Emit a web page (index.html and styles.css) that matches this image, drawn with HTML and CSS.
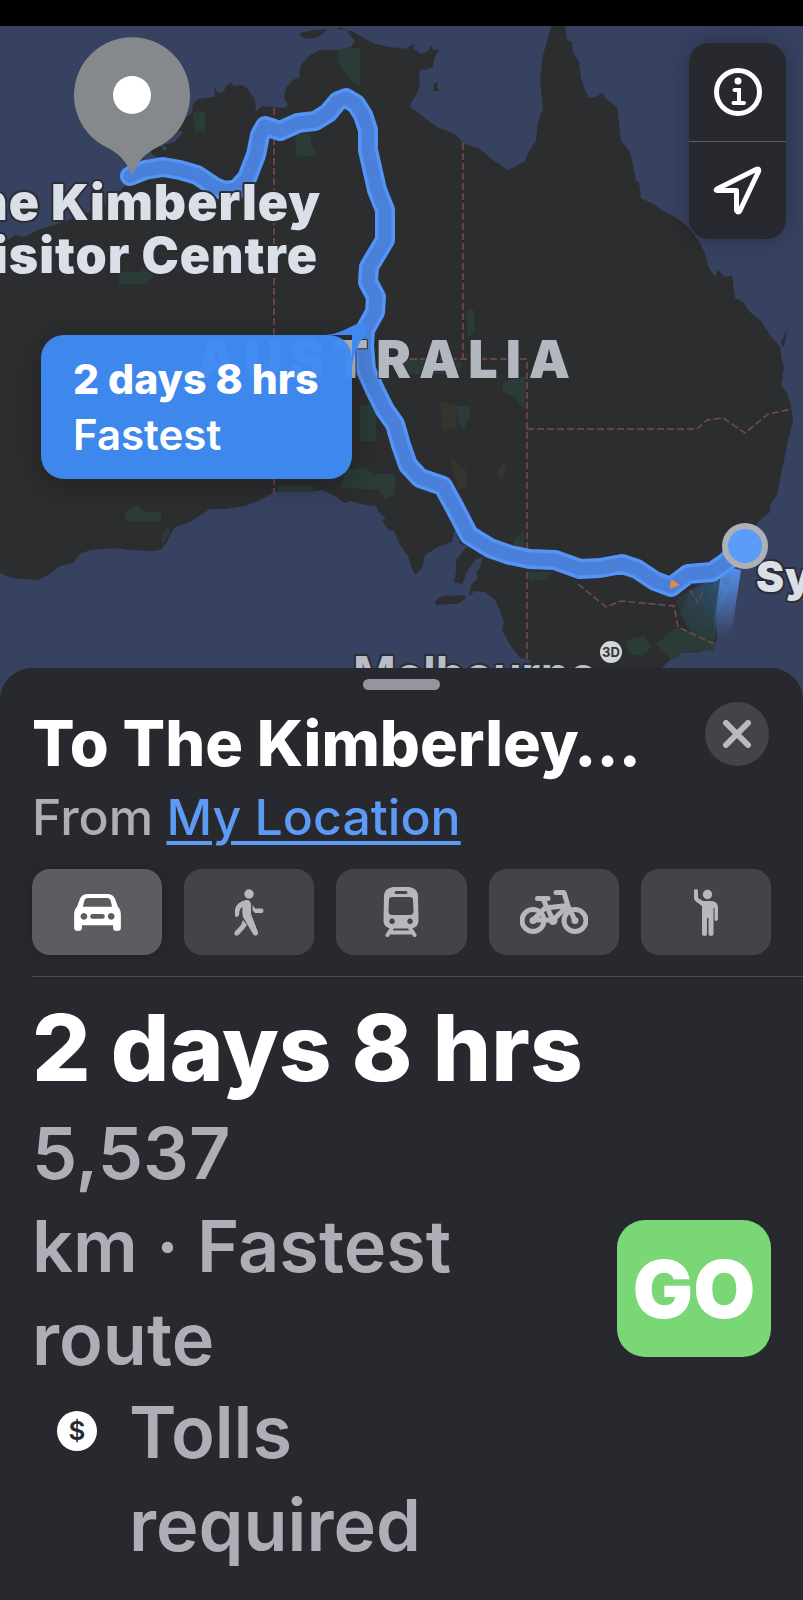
FILE: index.html
```
<!DOCTYPE html>
<html lang="en">

<head>
      <meta charset="UTF-8">
      <meta name="viewport" content="width=device-width, initial-scale=1.0">
      <title>Directions</title>
      <link rel="stylesheet" href="styles.css">
</head>

<body>
      <div class="status-bar"></div>

      <section class="map">
            <svg class="map-canvas" viewBox="0 26 803 682" preserveAspectRatio="xMidYMin slice">
                  <defs>
                        <linearGradient id="beam" x1="0" y1="0" x2="0" y2="1">
                              <stop offset="0" stop-color="#5b9bff" stop-opacity="0.9" />
                              <stop offset="1" stop-color="#5b9bff" stop-opacity="0" />
                        </linearGradient>
                        <linearGradient id="haze" x1="1" y1="0" x2="0.3" y2="1">
                              <stop offset="0" stop-color="#2f5f95" stop-opacity="0.9" />
                              <stop offset="1" stop-color="#2b3a48" stop-opacity="0" />
                        </linearGradient>
                        <path id="route" d="M130 176 L145 170 163 167 180 170 197 175 215 187 225 191 237 189 247 178 256 155 260 135 265 126 280 131 298 123 315 121 328 113 338 101 346 98 356 104 363 115 368 130 368 150 377 190 385 210 385 240 369 267 368 282 376 297 375 312 365 330 364 345 366 370 376 392 385 410 395 424 401 445 408 465 420 478 443 486 455 508 469 535 490 548 510 555 530 559 555 560 580 569 600 568 622 564 637 569 655 581 671 587 688 574 712 572 725 563 745 545" />
                  </defs>

                  <!-- land -->
                  <g class="land">
                        <path d="M-5 245 L8 240 15 235 25 237 38 230 60 223 85 214 105 205 118 195 122 188 135 180 145 165 160 158 152 155 150 148 160 145 165 152 167 148 163 145 175 142 183 132 176 130 185 118 192 113 193 104 198 99 205 98 215 97 214 87 218 93 224 91 226 86 231 82 234 86 242 85 247 88 255 100 256 111 262 106 285 108 288 104 284 98 286 88 293 80 300 77 299 72 302 64 310 55 320 50 338 50 348 50 352 45 355 41 350 35 346 30 338 29 340 27 346 31 352 31 360 36 375 44 390 47 400 48 L406 49 415 43 413 48 421 54 428 51 431 45 433 50 439 50 434 59 433 67 425 70 422 69 419 72 420 83 418 92 409 106 437 127 455 134 463 143 480 149 490 158 508 170 524 162 530 150 536 140 538 122 543 108 540 80 543 55 552 24 565 24 567 40 572 42 573 52 579 62 581 78 585 90 589 98 596 97 602 93 606 99 617 107 619 122 621 140 630 152 634 170 636 181 639 183 641 198 655 205 665 212 680 220 690 229 700 243 706 256 708 266 715 277 718 270 725 277 732 275 735 298 743 302 750 312 760 320 772 338 780 346 781 356 784 368 781 385 788 395 791 405 793 422 788 440 784 460 780 480 777 495 770 505 770 512 762 518 752 530 742 550 735 565 725 590 718 605 716 620 717 640 712 648 700 652 680 653 668 662 650 680 640 710 550 710 537 680 530 660 520 658 510 645 502 630 504 622 500 610 495 600 485 592 475 591 469 596 471 585 478 578 476 572 480 568 482 557 475 560 467 572 462 584 454 582 456 572 456 560 464 550 468 546 460 544 455 528 452 542 438 547 425 555 422 568 415 575 411 566 408 556 400 545 398 540 394 531 388 530 382 520 386 518 380 514 376 506 365 505 350 501 345 503 335 496 322 490 310 492 275 492 260 500 245 506 225 509 210 509 190 522 175 527 168 540 162 549 155 551 128 550 115 548 90 550 80 554 73 563 60 566 50 574 38 580 12 578 -5 571Z" />
                        <path d="M300 33 Q312 30 327 29 Q322 38 308 39 Q300 38 300 33Z" />
                        <path d="M434 84 l4 -2 -1 5 2 4 -6 0Z" />
                        <path d="M435 601 q6 -6 14 -5 l15 -1 2 3 -8 6 -10 0 -12 1Z" />
                        <path d="M783 348 L781 342 787 330 785 342Z" />
                  </g>

                  <!-- parks -->
                  <g class="park">
                        <path d="M337 50 L348 47 360 49 360 86 352 83 340 66Z" />
                        <path d="M193 112 h12 v20 h-10Z" />
                        <path d="M295 134 h16 v10 l6 10 -6 2 -15 1Z" />
                        <path d="M119 272 h20 l8 -4 8 9 -10 7 h-26Z" />
                        <path d="M466 310 h8 v22 l-6 6Z" />
                        <path d="M360 405 h16 v36 h-16Z" />
                        <path d="M345 470 l20 -2 10 6 20 0 v20 l-10 6 -6 -10 -38 -2Z" />
                        <path d="M125 512 l12 -8 8 8 16 0 v9 h-37Z" />
                        <path d="M278 486 h35 v6 h-35Z" />
                        <path d="M400 358 l40 2 22 2 -4 12 h-58Z" />
                        <path d="M503 382 l22 -6 v34 l-10 -12 -12 -6Z" />
                        <path d="M455 406 h15 v12 l-7 12 -4 -6Z" />
                        <path d="M514 540 l10 -10 v18 l-10 -2Z" />
                        <path d="M528 572 h25 l-8 7 -16 2Z" />
                        <path d="M690 590 l30 -8 -2 26 -4 42 -30 2 -12 8 -16 -16 20 -16 14 4 -10 -20Z" />
                        <path d="M625 640 l20 -4 6 12 -10 8 -12 -2Z" />
                        <path d="M162 535 l6 -8 2 6 -8 12Z" />
                  </g>
                  <g class="desert">
                        <path d="M440 402 l16 3 1 22 -14 4Z" />
                        <path d="M450 458 l16 12 0 18 -8 2Z" />
                        <path d="M498 468 l9 -7 -3 18 -6 0Z" />
                  </g>

                  <!-- state borders -->
                  <g class="border">
                        <path d="M274 108 V494" />
                        <path d="M463 143 V358" />
                        <path d="M400 359 H527 V660" />
                        <path d="M527 429 H697 L707 420 723 418 745 433 768 414 792 409" />
                        <path d="M578 584 L606 607 621 601 674 606 678 627 714 644" />
                        <path d="M690 590 L698 603 704 588" />
                  </g>

                  <!-- heading beam of the current position -->
                  <path fill="url(#haze)" d="M715 575 L675 600 700 650 730 590Z" />
                  <path fill="url(#beam)" d="M722 566 L741 570 731 636 712 636Z" />

                  <use href="#route" class="route-outer" />
                  <use href="#route" class="route-inner" />
                  <path d="M671 579 L680 585 670 589Z" fill="#e8884a" />

                  <!-- labels -->
                  <g class="place">
                        <text x="321" y="220" text-anchor="end" font-size="50">The Kimberley</text>
                        <text x="318" y="273" text-anchor="end" font-size="50">Visitor Centre</text>
                        <text x="756" y="592" font-size="42">Sydney</text>
                  </g>
                  <text class="city" x="353" y="690" font-size="46">Melbourne</text>
                  <text class="country" x="196" y="378" font-size="52">AUSTRALIA</text>

                  <!-- pins -->
                  <circle cx="611" cy="652" r="11" fill="#d3d7dc" />
                  <text class="badge-3d" x="611" y="657">3D</text>
                  <circle class="here" cx="745" cy="546" r="20" />
                  <path class="pin" d="M132 175 C127 164 122 155 108 148 A58 58 0 1 1 156 148 C142 155 137 164 132 175Z" />
                  <circle cx="132" cy="95" r="19" fill="#fff" />
            </svg>

            <button class="callout" type="button">
                  <svg class="callout-tail" viewBox="0 0 46 44">
                        <path d="M0 12 C14 12 28 1 36 0 C44 -1 44 6 40 12 C34 20 30 26 27 44 V12Z" />
                  </svg>
                  <strong>2 days 8 hrs</strong>
                  <span>Fastest</span>
            </button>

            <div class="map-controls">
                  <button type="button" aria-label="Map info">
                        <svg viewBox="0 0 50 50" width="50" height="50">
                              <circle cx="25" cy="25" r="21.5" fill="none" stroke="#fff" stroke-width="5" />
                              <circle cx="25" cy="14" r="3.5" fill="#fff" />
                              <path d="M21.5 23 H26 V36 M20.5 36 H31" fill="none" stroke="#fff" stroke-width="4" stroke-linecap="round" />
                        </svg>
                  </button>
                  <button type="button" aria-label="Track location">
                        <svg viewBox="0 0 50 50" width="50" height="50">
                              <path d="M4 23 L43 3.5 Q46.5 2 45.500 5.5 L27 44.5 Q25 47.5 23.5 44.500 V24.5 H4.500 Q2 24.5 4 23Z" fill="none" stroke="#fff" stroke-width="5" stroke-linejoin="round" />
                        </svg>
                  </button>
            </div>
      </section>

      <main class="sheet">
            <div class="handle"></div>

            <header class="sheet-header">
                  <div class="titles">
                        <h1>To The Kimberley…</h1>
                        <p>From <a href="#">My Location</a></p>
                  </div>
                  <button class="close" type="button" aria-label="Close">
                        <svg viewBox="0 0 28 28" width="28" height="28">
                              <path d="M3 3 L25 25 M25 3 L3 25" stroke="#b9b9c0" stroke-width="6" stroke-linecap="round" />
                        </svg>
                  </button>
            </header>

            <nav class="modes">
                  <button class="mode active" type="button" aria-label="Drive">
                        <svg viewBox="0 0 48 38" width="47" height="37">
                              <path fill-rule="evenodd" d="M14 0 H34 Q40 0 42 5 L45 13 Q48 16 48 21 V35 Q48 38 44 38 Q40 38 40 35 V32 H8 V35 Q8 38 4 38 Q0 38 0 35 V21 Q0 16 3 13 L6 5 Q8 0 14 0Z M14 4 Q11 4 10.500 7 L9 13 H39 L37.500 7 Q37 4 34 4Z M10 19.500 a3.500 3.500 0 1 0 .1 0Z M38 19.500 a3.500 3.500 0 1 0 .1 0Z M19 20.500 a2.500 2.500 0 0 0 0 5 H29 a2.500 2.500 0 0 0 0 -5Z" />
                        </svg>
                  </button>
                  <button class="mode" type="button" aria-label="Walk">
                        <svg viewBox="0 0 30 47" width="30" height="47">
                              <circle cx="15" cy="5" r="4.700" />
                              <path d="M12 11 Q17 11 17 16 V25 L24 43 Q24.500 46 22 46.500 Q20 47 19 45 L9 28 Q8 25 8.500 18 Q6 19 5.500 22 L5 26 Q4 28 2.500 28 Q1 28 1 26 V20 Q3 13 12 11Z" />
                              <path d="M9 31 L13 36 Q11 39 5 45.500 Q3 47.500 1 46 Q-.5 44.500 1 42.500 L7 36Z" />
                              <path d="M18.500 16 L21 19.500 H27.500 Q29.500 19.500 29.500 21.500 Q29.500 24 27.500 24 H21 Q18.500 22 18.500 20Z" />
                        </svg>
                  </button>
                  <button class="mode" type="button" aria-label="Transit">
                        <svg viewBox="0 0 36 50" width="36" height="50">
                              <path fill-rule="evenodd" d="M10 0 H26 Q34 1 35 8 L35.500 34 Q35 41 28 41.500 H8 Q1 41 .5 34 L1 8 Q2 1 10 0Z M13 4 a1.500 1.500 0 0 0 0 3 H23 a1.500 1.500 0 0 0 0 -3Z M9 10 Q6 10 6 13 L5.500 25 Q6 28 9 28 H27 Q30 28 30.500 25 L30 13 Q30 10 27 10Z M9 31.500 a2.800 2.800 0 1 0 .1 0Z M27 31.500 a2.800 2.800 0 1 0 .1 0Z" />
                              <path d="M9 41 L4.500 48 M27 41 L31.500 48 M8 45.500 H28" class="rail" />
                        </svg>
                  </button>
                  <button class="mode" type="button" aria-label="Cycle">
                        <svg viewBox="0 0 68 44" width="68" height="44" class="bike">
                              <circle cx="13" cy="30.500" r="11" />
                              <circle cx="55" cy="30.500" r="11" />
                              <path d="M36 2.500 H44 L48 16 55 30.500 M17.500 8.500 H28 M23 9 L33 30 H13 L25 18 48 15.500 33 30" />
                              <circle cx="33" cy="30.500" r="2" />
                              <circle cx="55" cy="30.500" r="1" />
                              <circle cx="13" cy="30.500" r="1" />
                        </svg>
                  </button>
                  <button class="mode" type="button" aria-label="Ride hailing">
                        <svg viewBox="0 0 24 47" width="24" height="47">
                              <circle cx="13.500" cy="5.500" r="4.700" />
                              <path d="M0 2 Q0 0 2 0 Q4 0 4 2 V9 L9 12 H17 Q24 12 24 19 V30 Q24 32 22 32 Q20.500 32 20.500 30 V19 H19.500 V44.500 Q19.500 47 17 47 Q14.500 47 14.500 44.500 V29 H13 V44.500 Q13 47 10.500 47 Q8 47 8 44.500 V17 L2 12.500 Q0 11 0 9Z" />
                        </svg>
                  </button>
            </nav>

            <section class="route">
                  <div class="route-info">
                        <h2>2 days 8 hrs</h2>
                        <p>5,537<br>km · Fastest<br>route</p>
                        <div class="tolls">
                              <span class="coin">$</span>
                              <p>Tolls<br>required</p>
                        </div>
                  </div>
                  <button class="go" type="button">GO</button>
            </section>
      </main>
</body>

</html>
```
FILE: styles.css
```
* {
      box-sizing: border-box;
}

body {
      margin: 0;
      min-height: 100vh;
      display: flex;
      flex-direction: column;
      background-color: #28292e;
      color: #fff;
      font-family: Inter, "Liberation Sans", sans-serif;
      overflow-x: hidden;
}

h1,
h2,
p {
      margin: 0;
}

button {
      border: none;
      padding: 0;
      margin: 0;
      color: inherit;
      font-family: inherit;
      cursor: pointer;
}

.status-bar {
      height: 26px;
      background-color: #000;
}

/* map */

.map {
      position: relative;
      height: 682px;
      background-color: #374261;
      overflow: hidden;
}

.map-canvas {
      display: block;
      width: 100%;
      height: 100%;
}

.land {
      fill: #2c2d2f;
}

.park {
      fill: #2a3b38;
}

.desert {
      fill: #34352f;
}

.border {
      fill: none;
      stroke: #7c4a4e;
      stroke-width: 1.5;
      stroke-dasharray: 7 3;
}

.route-outer,
.route-inner {
      fill: none;
      stroke: #5394f6;
      stroke-width: 20;
      stroke-linecap: round;
      stroke-linejoin: round;
}

.route-inner {
      stroke: #4a80d9;
      stroke-width: 13;
}

.place,
.city,
.country {
      fill: #dbe0e8;
      stroke: #2c2d33;
      stroke-width: 4;
      stroke-linejoin: round;
      paint-order: stroke;
      font-weight: 900;
}

.place {
      letter-spacing: 1px;
}

.city {
      fill: #b9bdc6;
      font-weight: 700;
}

.country {
      fill: #b3b7c0;
      stroke-width: 2;
      letter-spacing: 8px;
}

.badge-3d {
      fill: #33353a;
      font-size: 13px;
      font-weight: 700;
      text-anchor: middle;
}

.here {
      fill: #5b9bfa;
      stroke: #aeb0b6;
      stroke-width: 6;
}

.pin {
      fill: #86898b;
}

.callout {
      position: absolute;
      left: 41px;
      top: 309px;
      display: flex;
      flex-direction: column;
      align-items: flex-start;
      padding: 16px 30px 16px 32px;
      min-width: 311px;
      border-radius: 23px;
      background-color: rgba(63, 138, 243, 0.97);
      box-shadow: 0 6px 30px rgba(0, 0, 0, 0.25);
      font-size: 42px;
      line-height: 56px;
      white-space: nowrap;
}

.callout strong {
      font-size: 41px;
      font-weight: 800;
}

.callout span {
      font-weight: 600;
}

.callout-tail {
      position: absolute;
      right: -19px;
      top: -12px;
      width: 46px;
      height: 44px;
      fill: #3f89f0;
}

.map-controls {
      position: absolute;
      top: 17px;
      right: 17px;
      width: 97px;
      border-radius: 20px;
      background-color: #28292e;
      box-shadow: 0 0 24px rgba(0, 0, 0, 0.25);
}

.map-controls button {
      display: flex;
      align-items: center;
      justify-content: center;
      width: 100%;
      height: 98px;
      background: none;
}

.map-controls button + button {
      border-top: 1px solid #5b5c61;
}

/* bottom sheet */

.sheet {
      position: relative;
      flex: 1;
      display: flex;
      flex-direction: column;
      margin-top: -40px;
      padding-top: 11px;
      border-radius: 32px 32px 0 0;
      background-color: #28292e;
}

.handle {
      width: 77px;
      height: 11px;
      margin: 0 auto;
      border-radius: 6px;
      background-color: #96959d;
}

.sheet-header {
      display: flex;
      justify-content: space-between;
      align-items: flex-start;
      padding: 12px 34px 0 32px;
}

.titles h1 {
      font-size: 63px;
      line-height: 82px;
      font-weight: 800;
      white-space: nowrap;
}

.titles p {
      font-size: 50px;
      line-height: 66px;
      font-weight: 500;
      color: #aeaeb6;
}

.titles a {
      color: #5c9af5;
      text-decoration-thickness: 4px;
      text-underline-offset: 6px;
}

.close {
      display: flex;
      align-items: center;
      justify-content: center;
      flex: none;
      width: 64px;
      height: 64px;
      border-radius: 50%;
      background-color: #434448;
}

.modes {
      display: grid;
      grid-template-columns: repeat(5, 1fr);
      gap: 22px;
      padding: 19px 32px 21px;
}

.mode {
      display: flex;
      align-items: center;
      justify-content: center;
      height: 86px;
      border-radius: 18px;
      background-color: #434448;
      fill: #b7b7bf;
      stroke: none;
}

.mode.active {
      background-color: #5c5d60;
      fill: #fff;
      box-shadow: 0 0 16px rgba(0, 0, 0, 0.2);
}

.rail,
.bike {
      fill: none;
      stroke: #b7b7bf;
      stroke-width: 4;
      stroke-linecap: round;
      stroke-linejoin: round;
}

.bike {
      stroke-width: 5;
}

.route {
      flex: 1;
      display: flex;
      align-items: center;
      justify-content: space-between;
      margin-left: 32px;
      padding-right: 32px;
      border-top: 1px solid #4b4c51;
}

.route-info {
      padding-bottom: 16px;
}

.route-info h2 {
      font-size: 92px;
      line-height: 116px;
      font-weight: 800;
}

.route-info p {
      font-size: 72px;
      line-height: 93px;
      font-weight: 600;
      color: #aeaeb6;
}

.tolls {
      display: flex;
      align-items: flex-start;
      gap: 32px;
      padding-left: 25px;
}

.coin {
      width: 40px;
      height: 40px;
      margin-top: 26px;
      border-radius: 50%;
      background-color: #fff;
      color: #28292e;
      font-size: 26px;
      line-height: 40px;
      font-weight: 600;
      text-align: center;
}

.go {
      width: 154px;
      height: 137px;
      border-radius: 28px;
      background-color: #79d775;
      color: #fff;
      font-size: 80px;
      font-weight: 900;
}
```
